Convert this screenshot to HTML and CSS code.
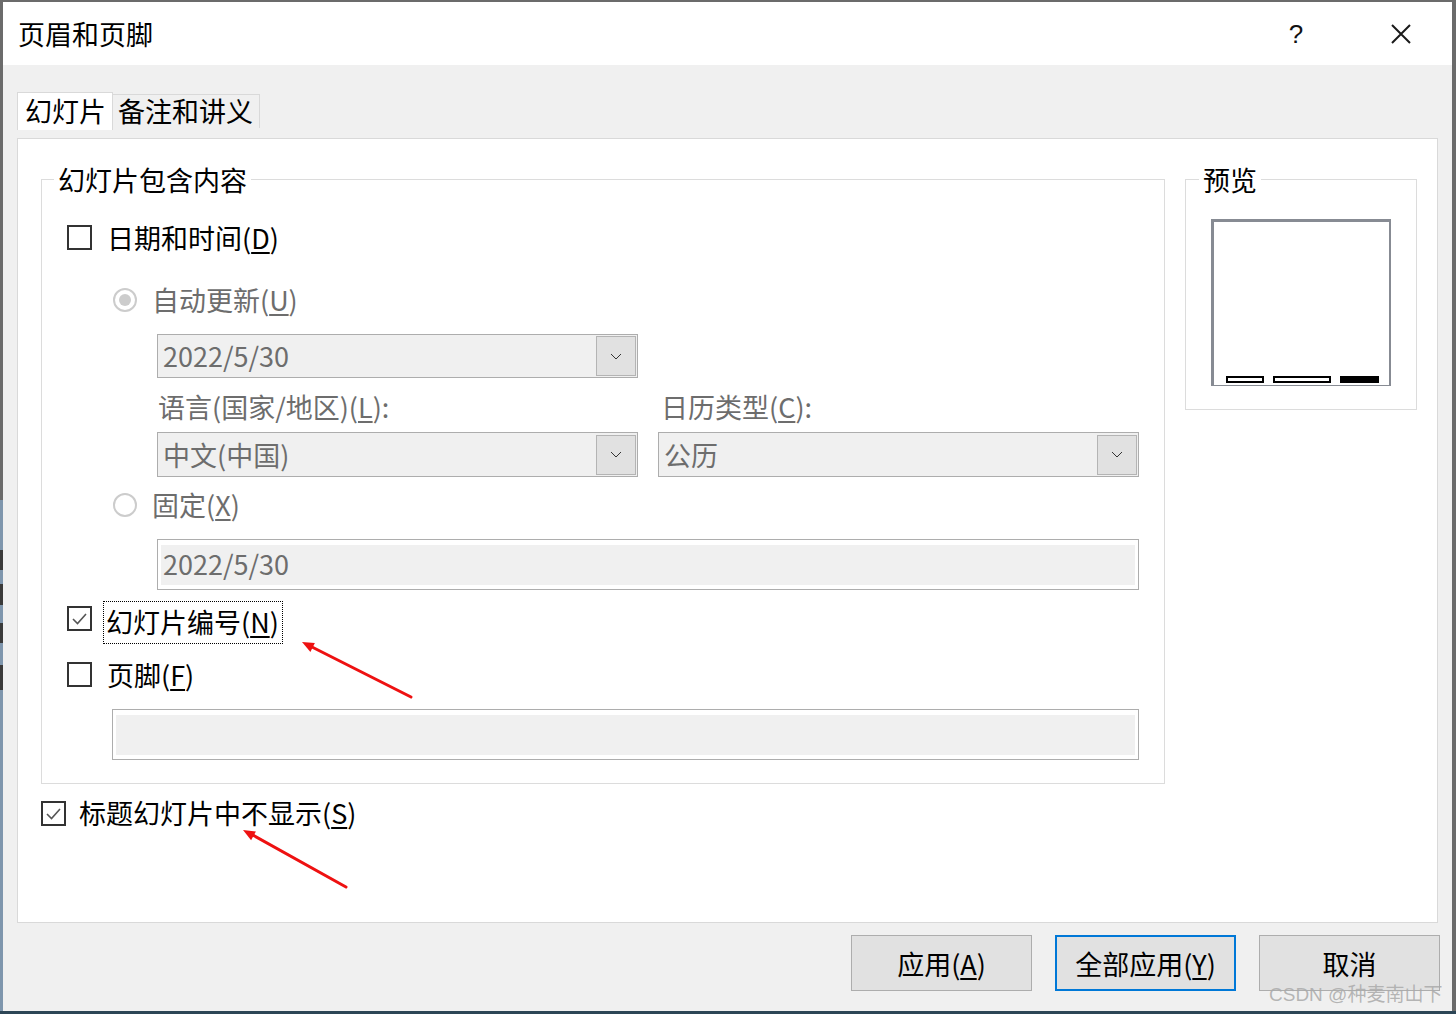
FILE: index.html
```html
<!DOCTYPE html>
<html lang="zh-CN">
<head>
<meta charset="utf-8">
<title>页眉和页脚</title>
<link rel="stylesheet" href="styles.css">
</head>
<body>
<div class="edge-left"></div>
<div class="window">
  <header class="titlebar">
    <span class="title">页眉和页脚</span>
    <span class="help">?</span>
    <svg class="close" width="20" height="20" viewBox="0 0 20 20"><path d="M1 1 L19 19 M19 1 L1 19" stroke="#1a1a1a" stroke-width="2" fill="none"/></svg>
  </header>
  <div class="client">
    <div class="tabs">
      <div class="tab active">幻灯片</div>
      <div class="tab">备注和讲义</div>
    </div>
    <div class="panel">
      <div class="groups">
        <div class="group main">
          <span class="legend">幻灯片包含内容</span>
          <div class="row r-a">
            <span class="cb"></span><span class="lbl">日期和时间(<u>D</u>)</span>
          </div>
          <div class="row r-b">
            <span class="radio on"><span class="dot"></span></span><span class="lbl dis">自动更新(<u>U</u>)</span>
          </div>
          <div class="combo r-c">
            <span class="combo-text">2022/5/30</span>
            <span class="combo-btn"><svg width="12" height="7" viewBox="0 0 12 7"><polyline points="1,1 6,6 11,1" fill="none" stroke="#333" stroke-width="1"/></svg></span>
          </div>
          <div class="lang-grid">
            <span class="lbl-plain dis">语言(国家/地区)(<u>L</u>):</span>
            <span class="lbl-plain dis cal">日历类型(<u>C</u>):</span>
            <div class="combo">
              <span class="combo-text">中文(中国)</span>
              <span class="combo-btn"><svg width="12" height="7" viewBox="0 0 12 7"><polyline points="1,1 6,6 11,1" fill="none" stroke="#333" stroke-width="1"/></svg></span>
            </div>
            <div class="combo">
              <span class="combo-text">公历</span>
              <span class="combo-btn"><svg width="12" height="7" viewBox="0 0 12 7"><polyline points="1,1 6,6 11,1" fill="none" stroke="#333" stroke-width="1"/></svg></span>
            </div>
          </div>
          <div class="row r-f">
            <span class="radio"></span><span class="lbl dis">固定(<u>X</u>)</span>
          </div>
          <div class="field r-g"><span class="field-in">2022/5/30</span></div>
          <div class="row r-h">
            <span class="cb checked"><svg width="21" height="21" viewBox="0 0 21 21"><polyline points="4,11 8.5,15.5 17,6" fill="none" stroke="#555" stroke-width="1.6"/></svg></span><span class="focus">幻灯片编号(<u>N</u>)</span>
          </div>
          <div class="row r-i">
            <span class="cb"></span><span class="lbl">页脚(<u>F</u>)</span>
          </div>
          <div class="field r-j"><span class="field-in"></span></div>
        </div>
        <div class="group preview">
          <span class="legend">预览</span>
          <div class="slide">
            <span class="bar b1"></span><span class="bar b2"></span><span class="bar b3 fill"></span>
          </div>
        </div>
      </div>
      <div class="row r-title">
        <span class="cb checked"><svg width="21" height="21" viewBox="0 0 21 21"><polyline points="4,11 8.5,15.5 17,6" fill="none" stroke="#555" stroke-width="1.6"/></svg></span><span class="lbl t">标题幻灯片中不显示(<u>S</u>)</span>
      </div>
    </div>
    <div class="buttons">
      <div class="btn">应用(<u>A</u>)</div>
      <div class="btn default">全部应用(<u>Y</u>)</div>
      <div class="btn">取消</div>
    </div>
  </div>
</div>
<svg class="annot" width="1456" height="1014" viewBox="0 0 1456 1014">
  <line x1="411" y1="697" x2="310" y2="646" stroke="#ee1111" stroke-width="3" stroke-linecap="round"/>
  <polygon points="302,642 314.9,642.9 310.4,651.9" fill="#ee1111"/>
  <line x1="346" y1="887" x2="251" y2="834" stroke="#ee1111" stroke-width="3" stroke-linecap="round"/>
  <polygon points="243,830 255.9,831.4 251.1,840.2" fill="#ee1111"/>
</svg>
<span class="watermark">CSDN @种麦南山下</span>
</body>
</html>
```
FILE: styles.css
```css
* { box-sizing: border-box; }
html, body { margin: 0; }
body {
  width: 1456px;
  height: 1014px;
  overflow: hidden;
  position: relative;
  display: flex;
  padding: 2px 4px 3px 0;
  background: linear-gradient(to top, #2d4656 0, #2d4656 3px, transparent 3px), #6b6b6b;
  font-family: "Noto Sans CJK SC", "Microsoft YaHei", sans-serif;
  font-size: 27px;
  color: #000;
}
u { text-decoration-thickness: 1.5px; text-underline-offset: 3px; }
.edge-left {
  width: 3px;
  flex: none;
  background: linear-gradient(to bottom,
    #6b6b6b 0 498px, #7f96ad 498px 548px, #3a3a3a 548px 568px,
    #7f96ad 568px 582px, #3a3a3a 582px 603px, #7f96ad 603px 621px,
    #3a3a3a 621px 641px, #7f96ad 641px 663px, #3a3a3a 663px 688px,
    #7f96ad 688px);
}
.window {
  flex: 1;
  display: flex;
  flex-direction: column;
  background: #f0f0f0;
}
.titlebar {
  height: 63px;
  flex: none;
  background: #fff;
  display: flex;
  align-items: center;
  padding: 0 41px 0 15px;
}
.title { line-height: 32px; }
.help {
  margin-left: auto;
  width: 24px;
  text-align: center;
  font-family: "Liberation Sans", sans-serif;
  font-size: 26px;
  line-height: 30px;
  margin-right: 83px;
  color: #111;
}
.close { display: block; }
.client {
  flex: 1;
  display: flex;
  flex-direction: column;
  padding: 27px 13px 0 14px;
}
.tabs {
  display: flex;
  align-items: center;
  height: 38px;
}
.tab {
  height: 34px;
  width: 147px;
  border-top: 1px solid #d9d9d9;
  border-right: 1px solid #d9d9d9;
  padding-left: 5px;
  line-height: 32px;
}
.tab.active {
  width: 96px;
  height: 38px;
  background: #fff;
  border: 1px solid #d9d9d9;
  border-bottom: none;
  padding-left: 7px;
  line-height: 36px;
}
.panel {
  margin-top: 8px;
  height: 785px;
  width: 1421px;
  background: #fff;
  border: 1px solid #d9d9d9;
  padding: 40px 20px 0 23px;
}
.groups {
  display: flex;
  gap: 20px;
  align-items: flex-start;
}
.group {
  position: relative;
  border: 1px solid #dcdcdc;
}
.group.main {
  width: 1124px;
  padding: 0 25px 23px 25px;
}
.group.preview {
  width: 232px;
  height: 231px;
  padding: 39px 0 0 25px;
}
.legend {
  position: absolute;
  top: -18px;
  left: 12px;
  padding: 0 4px;
  background: #fff;
  line-height: 36px;
  white-space: nowrap;
}
.preview .legend { left: 13px; }
.row { display: flex; align-items: center; }
.lbl { margin-left: 15px; line-height: 30px; white-space: nowrap; }
.dis { color: #6d6d6d; }
.cb {
  width: 25px;
  height: 25px;
  flex: none;
  border: 2px solid #333;
  background: #fff;
  display: flex;
  align-items: center;
  justify-content: center;
}
.cb svg { display: block; }
.radio {
  width: 24px;
  height: 24px;
  flex: none;
  border: 2px solid #cccccc;
  border-radius: 50%;
  display: flex;
  align-items: center;
  justify-content: center;
  background: #fff;
}
.radio .dot {
  width: 12px;
  height: 12px;
  border-radius: 50%;
  background: #cccccc;
}
.r-a { margin-top: 45px; height: 25px; }
.r-b { margin-top: 38px; height: 24px; margin-left: 46px; }
.combo {
  height: 44px;
  width: 481px;
  border: 1px solid #adadad;
  background: #f0f0f0;
  display: flex;
  align-items: center;
  padding: 0 1px 0 5px;
  color: #6d6d6d;
}
.combo-text { flex: 1; line-height: 30px; white-space: nowrap; }
.combo-btn {
  width: 40px;
  height: 40px;
  background: #e1e1e1;
  border: 1px solid #b4b4b4;
  display: flex;
  align-items: center;
  justify-content: center;
}
.combo-btn svg { display: block; }
.r-c { margin-top: 22px; margin-left: 90px; }
.lang-grid {
  margin-top: 14px;
  margin-left: 90px;
  display: grid;
  grid-template-columns: 481px 481px;
  grid-template-rows: 30px 45px;
  column-gap: 20px;
  row-gap: 10px;
}
.lang-grid .combo { height: 45px; }
.lbl-plain { line-height: 30px; white-space: nowrap; padding-left: 1px; }
.lbl-plain.cal { padding-left: 3px; }
.r-f { margin-top: 16px; height: 24px; margin-left: 46px; }
.field {
  height: 51px;
  border: 1px solid #adadad;
  background: #fff;
  padding: 5px 3px 4px 3px;
  display: flex;
}
.field-in {
  flex: 1;
  background: #f0f0f0;
  color: #6d6d6d;
  line-height: 38px;
  padding-left: 2px;
}
.r-g { margin-top: 22px; margin-left: 90px; width: 982px; }
.r-h { margin-top: 11px; height: 43px; align-items: flex-start; }
.r-h .cb { margin-top: 5px; }
.focus {
  margin-left: 11px;
  height: 43px;
  border: 1px dotted #000;
  padding: 0 3px 0 2px;
  line-height: 40px;
  white-space: nowrap;
}
.r-i { margin-top: 18px; height: 25px; }
.r-j { margin-top: 22px; margin-left: 45px; width: 1027px; }
.r-title { margin-top: 16px; height: 26px; }
.lbl.t { margin-left: 13px; }
.slide {
  width: 180px;
  height: 167px;
  border: 2px solid #878b93;
  border-top-width: 3px;
  border-left-width: 3px;
  border-bottom-width: 1px;
  background: #fff;
  display: flex;
  align-items: flex-end;
  gap: 9px;
  padding: 0 0 2px 12px;
}
.bar { height: 7px; border: 2px solid #000; background: #fff; }
.b1 { width: 38px; }
.b2 { width: 58px; }
.b3 { width: 39px; }
.bar.fill { background: #000; }
.buttons {
  display: flex;
  justify-content: flex-end;
  gap: 23px;
  margin-top: 12px;
  margin-right: -1px;
}
.btn {
  width: 181px;
  height: 56px;
  background: #e1e1e1;
  border: 1px solid #adadad;
  display: flex;
  align-items: center;
  justify-content: center;
  line-height: 30px;
  padding-top: 2px;
}
.btn.default { border: 2px solid #0078d7; }
.annot {
  position: absolute;
  left: 0;
  top: 0;
  pointer-events: none;
}
.watermark {
  position: absolute;
  left: 1269px;
  top: 982px;
  font-family: "Liberation Sans", "Noto Sans CJK SC", sans-serif;
  font-size: 19px;
  line-height: 26px;
  color: rgba(170, 170, 170, 0.85);
  white-space: nowrap;
}
```
